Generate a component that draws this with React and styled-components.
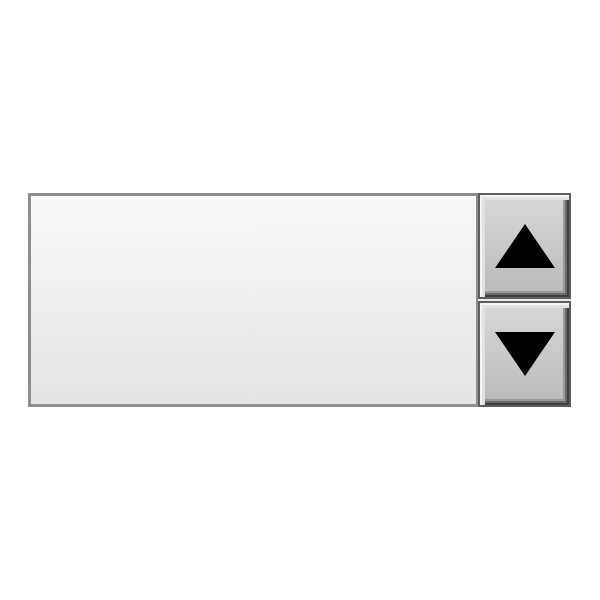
import styled, { createGlobalStyle } from "styled-components";

const Global = createGlobalStyle`
  html, body {
    margin: 0;
    padding: 0;
    background: #fff;
    font-family: "Liberation Sans", Arial, sans-serif;
  }
`;

const Page = styled.div`
  width: 600px;
  height: 600px;
  display: flex;
  align-items: center;
  justify-content: center;
`;

const Spinner = styled.div`
  display: flex;
  width: 543px;
  height: 214px;
  margin-top: -1px;
  margin-left: -1px;
`;

const Field = styled.div`
  flex: 1;
  border: 3px solid #8e8e8e;
  border-right-width: 2px;
  background: linear-gradient(to bottom, #f8f8f8, #e4e4e4);
`;

const Buttons = styled.div`
  width: 93px;
  display: flex;
  flex-direction: column;
  gap: 2px;
  background: #e8e8e8;
`;

const Arrow = styled.button`
  flex: 1;
  padding: 0;
  margin: 0;
  display: flex;
  align-items: center;
  justify-content: center;
  border: 2px solid #5e5e5e;
  background: linear-gradient(to bottom, #d8d8d8, #bababa);
  box-shadow:
    inset 2px 2px 0 #f4f4f4,
    inset 5px 5px 0 #e2e2e2,
    inset -2px -2px 0 #3e3e3e,
    inset -4px -4px 0 #6a6a6a,
    inset -6px -6px 0 #9a9a9a;
  cursor: pointer;
`;

function Triangle({ down }) {
  return (
    <svg width="60" height="44" viewBox="0 0 60 44">
      {down ? (
        <polygon points="0,0 60,0 30,44" fill="#000" />
      ) : (
        <polygon points="30,0 60,44 0,44" fill="#000" />
      )}
    </svg>
  );
}

export default function App() {
  return (
    <>
      <Global />
      <Page>
        <Spinner>
          <Field />
          <Buttons>
            <Arrow aria-label="increase">
              <Triangle />
            </Arrow>
            <Arrow aria-label="decrease">
              <Triangle down />
            </Arrow>
          </Buttons>
        </Spinner>
      </Page>
    </>
  );
}
